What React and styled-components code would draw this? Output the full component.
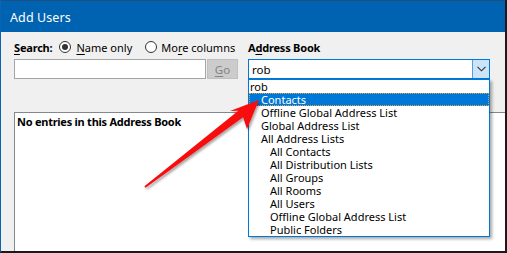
import React from "react";
import styled, { createGlobalStyle } from "styled-components";

const GlobalStyle = createGlobalStyle`
  html, body { margin: 0; padding: 0; background: #ffffff; }
  body { font-family: "Noto Sans", "Open Sans", Arial, sans-serif; font-size: 11px; color: #000; }
  * { box-sizing: border-box; }
`;

const Page = styled.div`
  position: relative;
  width: 507px;
  height: 253px;
`;

const Window = styled.div`
  width: 507px;
  height: 253px;
  display: flex;
  flex-direction: column;
  background: #f0f0f0;
  border-left: 1px solid #0a64b4;
  border-right: 2px solid #1a1a1a;
  border-bottom: 2px solid #1a1a1a;
  overflow: hidden;
`;

const TitleBar = styled.div`
  height: 32px;
  flex: 0 0 32px;
  background: #0063b1;
  border-top: 1px solid #1f4f7f;
  color: #ffffff;
  display: flex;
  align-items: center;
  padding: 1px 0 0 9px;
  font-size: 12.5px;
  letter-spacing: 0.1px;
`;

const Content = styled.div`
  flex: 1;
  display: flex;
  flex-direction: column;
  padding: 8px 0 0 13px;
  min-height: 0;
`;

const FormGrid = styled.div`
  display: grid;
  grid-template-columns: 224px 242px;
  grid-template-rows: 14px 20px;
  column-gap: 10px;
  row-gap: 5px;
`;

const Row = styled.div`
  display: flex;
  align-items: center;
  white-space: nowrap;
`;

const Label = styled.span`
  font-weight: 700;
  letter-spacing: -0.2px;
  margin-right: ${(p) => p.$gap || 0}px;
`;

const Key = styled.span`
  text-decoration: underline;
  text-underline-offset: 2px;
`;

const Radio = styled.span`
  width: 12px;
  height: 12px;
  border-radius: 50%;
  border: 1px solid #333333;
  background: #ffffff;
  display: inline-flex;
  align-items: center;
  justify-content: center;
  margin-right: ${(p) => p.$gap}px;
  flex: 0 0 auto;
  &::after {
    content: "";
    width: 6px;
    height: 6px;
    border-radius: 50%;
    background: ${(p) => (p.$checked ? "#333333" : "transparent")};
  }
`;

const RadioText = styled.span`
  margin-right: ${(p) => p.$gap || 0}px;
`;

const SearchInput = styled.div`
  width: 192px;
  height: 20px;
  background: #ffffff;
  border: 1px solid #a5a5a5;
`;

const GoButton = styled.div`
  width: 31px;
  height: 20px;
  margin-left: 1px;
  background: #cccccc;
  border: 1px solid #bfbfbf;
  color: #838383;
  display: flex;
  align-items: center;
  justify-content: center;
  font-size: 11.5px;
`;

const ComboWrap = styled.div`
  position: relative;
  width: 242px;
  height: 20px;
`;

const Combo = styled.div`
  width: 100%;
  height: 100%;
  background: #ffffff;
  border: 1px solid #0078d7;
  display: flex;
  align-items: center;
  padding-left: 3px;
  font-size: 11.5px;
`;

const DropButton = styled.div`
  margin-left: auto;
  width: 17px;
  height: 18px;
  background: #cce4f7;
  border-left: 1px solid #569de5;
  display: flex;
  align-items: center;
  justify-content: center;
`;

const DropList = styled.div`
  position: absolute;
  top: 20px;
  left: 0;
  width: 242px;
  height: 158px;
  background: #ffffff;
  border: 1px solid #0078d7;
  box-shadow: 2px 2px 3px rgba(0, 0, 0, 0.35);
  z-index: 2;
`;

const Item = styled.div`
  height: 13px;
  line-height: 13px;
  padding-left: ${(p) => [1, 12, 21][p.$level]}px;
  white-space: nowrap;
  background: ${(p) => (p.$selected ? "#0078d7" : "transparent")};
  color: ${(p) => (p.$selected ? "#ffffff" : "#000000")};
  outline: ${(p) => (p.$selected ? "1px dotted #f0a030" : "none")};
  outline-offset: -1px;
`;

const ListBox = styled.div`
  margin-top: 33px;
  margin-right: -4px;
  flex: 1;
  background: #ffffff;
  border-top: 1px solid #828790;
  border-left: 1px solid #828790;
  padding: 2px 0 0 2px;
`;

const EmptyText = styled.div`
  font-weight: 700;
  letter-spacing: -0.25px;
  line-height: 14px;
`;

const Overlay = styled.svg`
  position: absolute;
  left: 0;
  top: 0;
  width: 507px;
  height: 253px;
  pointer-events: none;
  z-index: 5;
`;

const items = [
  { t: "rob", l: 0 },
  { t: "Contacts", l: 1, s: true },
  { t: "Offline Global Address List", l: 1 },
  { t: "Global Address List", l: 1 },
  { t: "All Address Lists", l: 1 },
  { t: "All Contacts", l: 2 },
  { t: "All Distribution Lists", l: 2 },
  { t: "All Groups", l: 2 },
  { t: "All Rooms", l: 2 },
  { t: "All Users", l: 2 },
  { t: "Offline Global Address List", l: 2 },
  { t: "Public Folders", l: 2 },
];

export default function App() {
  return (
    <Page>
      <GlobalStyle />
      <Window>
        <TitleBar>Add Users</TitleBar>
        <Content>
          <FormGrid>
            <Row>
              <Label $gap={7}>
                <Key>S</Key>earch:
              </Label>
              <Radio $checked $gap={5} />
              <RadioText $gap={13}>
                <Key>N</Key>ame only
              </RadioText>
              <Radio $gap={4} />
              <RadioText>
                Mo<Key>r</Key>e columns
              </RadioText>
            </Row>
            <Row>
              <Label>
                A<Key>d</Key>dress Book
              </Label>
            </Row>
            <Row>
              <SearchInput />
              <GoButton>
                <Key>G</Key>o
              </GoButton>
            </Row>
            <ComboWrap>
              <Combo>
                rob
                <DropButton>
                  <svg width="9" height="6" viewBox="0 0 9 6">
                    <path d="M0.5 0.8 L4.5 4.8 L8.5 0.8" fill="none" stroke="#333" strokeWidth="1.1" />
                  </svg>
                </DropButton>
              </Combo>
              <DropList>
                {items.map((it, i) => (
                  <Item key={i} $level={it.l} $selected={it.s}>
                    {it.t}
                  </Item>
                ))}
              </DropList>
            </ComboWrap>
          </FormGrid>
          <ListBox>
            <EmptyText>No entries in this Address Book</EmptyText>
          </ListBox>
        </Content>
      </Window>
      <Overlay viewBox="0 0 507 253">
        <defs>
          <filter id="sh" x="-20%" y="-20%" width="140%" height="140%">
            <feDropShadow dx="1.5" dy="2" stdDeviation="1.2" floodColor="#000" floodOpacity="0.35" />
          </filter>
        </defs>
        <polygon
          points="144.4,186.2 238.3,110.8 230,111 259,100 247,129 243.1,117.2 145.6,187.8"
          fill="#f70d0d"
          filter="url(#sh)"
        />
      </Overlay>
    </Page>
  );
}
